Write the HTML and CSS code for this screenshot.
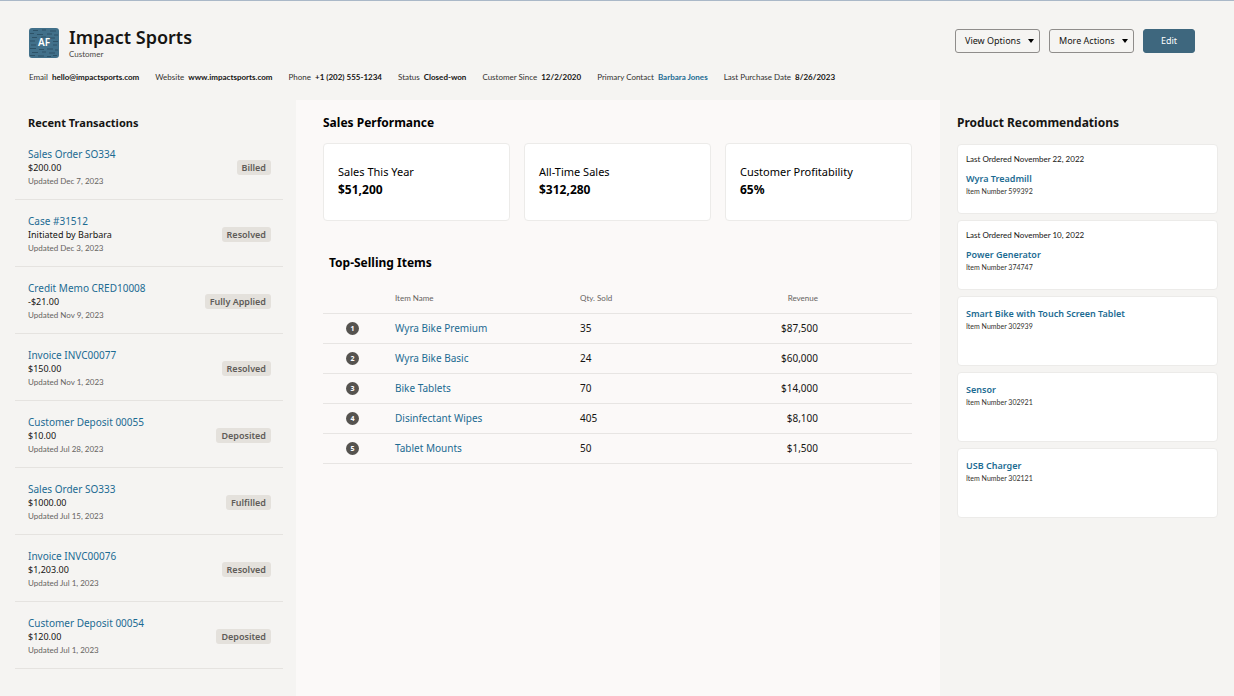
FILE: index.html
```html
<!DOCTYPE html>
<html lang="en">
<head>
<meta charset="utf-8">
<meta name="viewport" content="width=device-width, initial-scale=1">
<title>Impact Sports</title>
<link rel="stylesheet" href="styles.css">
</head>
<body>
<header class="header">
  <div class="header-top">
    <svg class="avatar" viewBox="0 0 30 30" role="img" aria-label="AF">
      <rect width="30" height="30" rx="3" fill="#41708a"/>
      <path d="M4 2.500h5M13 2h4M21 3h6M1 5.500h4M8 6.500h6M18 6h5M25 7h4M3 9.500h5M12 9h5M20 10h6M1 13h5M24 13.500h5M2 17h5M24 17h4M1 20.500h6M10 21.500h5M18 21h6M26 22h3M3 24.500h6M13 24h4M20 25h6M1 27.500h5M9 28h6M18 28.500h4M24 27.500h4" fill="none" stroke="#284a5e" stroke-width=".8"/>
      <text class="avatar-text" x="15" y="18" text-anchor="middle">AF</text>
    </svg>
    <div class="identity">
      <h1 class="name">Impact Sports</h1>
      <p class="kind">Customer</p>
    </div>
    <div class="actions">
      <button class="button" type="button" aria-haspopup="menu">View Options<svg class="caret" viewBox="0 0 6 4" aria-hidden="true"><path d="M0 0h6L3 4z"/></svg></button>
      <button class="button" type="button" aria-haspopup="menu">More Actions<svg class="caret" viewBox="0 0 6 4" aria-hidden="true"><path d="M0 0h6L3 4z"/></svg></button>
      <button class="button primary" type="button">Edit</button>
    </div>
  </div>
  <dl class="facts">
    <div class="fact"><dt>Email</dt><dd>hello@impactsports.com</dd></div>
    <div class="fact"><dt>Website</dt><dd>www.impactsports.com</dd></div>
    <div class="fact"><dt>Phone</dt><dd>+1 (202) 555-1234</dd></div>
    <div class="fact"><dt>Status</dt><dd>Closed-won</dd></div>
    <div class="fact"><dt>Customer Since</dt><dd>12/2/2020</dd></div>
    <div class="fact"><dt>Primary Contact</dt><dd><a href="#">Barbara Jones</a></dd></div>
    <div class="fact"><dt>Last Purchase Date</dt><dd>8/26/2023</dd></div>
  </dl>
</header>
<div class="columns">
  <aside class="transactions">
    <h2 class="section-title">Recent Transactions</h2>
    <ul class="list">
      <li class="row"><div><a class="row-title" href="#">Sales Order SO334</a><p class="detail">$200.00</p><p class="updated">Updated Dec 7, 2023</p></div><span class="status">Billed</span></li>
      <li class="row"><div><a class="row-title" href="#">Case #31512</a><p class="detail">Initiated by Barbara</p><p class="updated">Updated Dec 3, 2023</p></div><span class="status">Resolved</span></li>
      <li class="row"><div><a class="row-title" href="#">Credit Memo CRED10008</a><p class="detail">-$21.00</p><p class="updated">Updated Nov 9, 2023</p></div><span class="status">Fully Applied</span></li>
      <li class="row"><div><a class="row-title" href="#">Invoice INVC00077</a><p class="detail">$150.00</p><p class="updated">Updated Nov 1, 2023</p></div><span class="status">Resolved</span></li>
      <li class="row"><div><a class="row-title" href="#">Customer Deposit 00055</a><p class="detail">$10.00</p><p class="updated">Updated Jul 28, 2023</p></div><span class="status">Deposited</span></li>
      <li class="row"><div><a class="row-title" href="#">Sales Order SO333</a><p class="detail">$1000.00</p><p class="updated">Updated Jul 15, 2023</p></div><span class="status">Fulfilled</span></li>
      <li class="row"><div><a class="row-title" href="#">Invoice INVC00076</a><p class="detail">$1,203.00</p><p class="updated">Updated Jul 1, 2023</p></div><span class="status">Resolved</span></li>
      <li class="row"><div><a class="row-title" href="#">Customer Deposit 00054</a><p class="detail">$120.00</p><p class="updated">Updated Jul 1, 2023</p></div><span class="status">Deposited</span></li>
    </ul>
  </aside>
  <main class="main">
    <h2 class="section-title">Sales Performance</h2>
    <div class="stats">
      <section class="stat"><h3 class="stat-label">Sales This Year</h3><p class="stat-value">$51,200</p></section>
      <section class="stat"><h3 class="stat-label">All-Time Sales</h3><p class="stat-value">$312,280</p></section>
      <section class="stat"><h3 class="stat-label">Customer Profitability</h3><p class="stat-value">65%</p></section>
    </div>
    <h2 class="section-title items-title">Top-Selling Items</h2>
    <table class="items">
      <thead><tr><th class="rank-cell"></th><th class="name-cell" scope="col">Item Name</th><th class="qty-cell" scope="col">Qty. Sold</th><th class="revenue" scope="col">Revenue</th></tr></thead>
      <tbody>
        <tr><td class="rank-cell"><span class="rank">1</span></td><td><a href="#">Wyra Bike Premium</a></td><td>35</td><td class="revenue">$87,500</td></tr>
        <tr><td class="rank-cell"><span class="rank">2</span></td><td><a href="#">Wyra Bike Basic</a></td><td>24</td><td class="revenue">$60,000</td></tr>
        <tr><td class="rank-cell"><span class="rank">3</span></td><td><a href="#">Bike Tablets</a></td><td>70</td><td class="revenue">$14,000</td></tr>
        <tr><td class="rank-cell"><span class="rank">4</span></td><td><a href="#">Disinfectant Wipes</a></td><td>405</td><td class="revenue">$8,100</td></tr>
        <tr><td class="rank-cell"><span class="rank">5</span></td><td><a href="#">Tablet Mounts</a></td><td>50</td><td class="revenue">$1,500</td></tr>
      </tbody>
    </table>
  </main>
  <aside class="recommendations">
    <h2 class="section-title">Product Recommendations</h2>
    <div class="products">
      <article class="product"><p class="ordered">Last Ordered November 22, 2022</p><a class="product-name" href="#">Wyra Treadmill</a><p class="number">Item Number 599392</p></article>
      <article class="product"><p class="ordered">Last Ordered November 10, 2022</p><a class="product-name" href="#">Power Generator</a><p class="number">Item Number 374747</p></article>
      <article class="product short"><a class="product-name" href="#">Smart Bike with Touch Screen Tablet</a><p class="number">Item Number 302939</p></article>
      <article class="product short"><a class="product-name" href="#">Sensor</a><p class="number">Item Number 302921</p></article>
      <article class="product short"><a class="product-name" href="#">USB Charger</a><p class="number">Item Number 302121</p></article>
    </div>
  </aside>
</div>
</body>
</html>
```
FILE: styles.css
```css
* { box-sizing: border-box; }

body {
  margin: 0;
  min-height: 100vh;
  display: flex;
  flex-direction: column;
  background: #f5f4f2;
  color: #161513;
  font-family: "Noto Sans", "Open Sans", sans-serif;
  font-size: 10px;
}

h1, h2, h3, p, ul, dl, dd { margin: 0; padding: 0; }
a { color: #1c6b92; text-decoration: none; }
a:hover { text-decoration: underline; }

.kind, .facts, .updated, .ordered, .number, .items th {
  font-family: Lato, "Noto Sans", sans-serif;
}

.header {
  border-top: 1px solid #aab8c8;
  padding: 26px 39px 0 29px;
}
.header-top { display: flex; align-items: flex-start; }
.avatar { width: 30px; height: 30px; margin-top: 1px; }
.avatar-text { fill: #fff; font-size: 10px; font-weight: 600; }
.identity { margin-left: 10px; }
.name { font-size: 18px; line-height: 20px; font-weight: 600; }
.kind { margin-top: 1px; font-size: 8px; line-height: 12px; color: #4a4845; }
.actions { display: flex; gap: 9px; margin: 2px 0 0 auto; }
.button {
  display: flex;
  align-items: center;
  justify-content: space-between;
  gap: 6px;
  min-width: 85px;
  height: 24px;
  padding: 0 5px 0 9px;
  border: 1px solid #8f8d8b;
  border-radius: 3px;
  background: transparent;
  color: #161513;
  font: 9px/14px "Noto Sans", "Open Sans", sans-serif;
}
.primary {
  min-width: 52px;
  padding: 0;
  justify-content: center;
  border-color: #3e677e;
  background: #3e677e;
  color: #fff;
}
.caret { width: 6px; height: 4px; }

.facts {
  display: flex;
  flex-wrap: wrap;
  gap: 4px 16px;
  margin-top: 10px;
  font-size: 8px;
  line-height: 14px;
}
.fact { display: flex; gap: 4px; }
.fact dt { color: #33312e; }
.fact dd { font-weight: 700; }

.columns {
  flex: 1;
  display: grid;
  grid-template-columns: 296px minmax(0, 1fr) 294px;
  margin-top: 16px;
}
.section-title { font-size: 12px; line-height: 16px; font-weight: 700; }

.transactions { padding: 15px 13px 0 15px; }
.transactions .section-title { padding-left: 13px; font-size: 11px; }
.list { list-style: none; margin-top: 2px; }
.row {
  display: flex;
  justify-content: space-between;
  align-items: center;
  padding: 13px 12px 11px 13px;
  border-bottom: 1px solid #e5e3e0;
}
.row-title { display: block; font-size: 10px; line-height: 16px; }
.detail { font-size: 9px; line-height: 12px; }
.updated { font-size: 8px; line-height: 14px; color: #66635f; }
.status {
  padding: 0 5px;
  border-radius: 3px;
  background: #e4e1dc;
  color: #5f5c58;
  font-size: 9px;
  line-height: 15px;
  font-weight: 600;
}

.main { padding: 15px 28px 0 27px; background: #fbf9f8; color: #000; }
.stats {
  display: grid;
  grid-template-columns: repeat(3, 1fr);
  gap: 14px;
  margin-top: 12px;
}
.stat {
  padding: 19px 14px 22px;
  border: 1px solid #ecebe9;
  border-radius: 4px;
  background: #fff;
}
.stat-label { font-size: 11px; line-height: 18px; font-weight: 400; }
.stat-value { font-size: 12px; line-height: 17px; font-weight: 700; }
.items-title { margin-top: 34px; padding-left: 6px; }
.items {
  width: 100%;
  margin-top: 12px;
  border-collapse: collapse;
  table-layout: fixed;
  color: #161513;
  font-size: 10px;
}
.items th, .items td {
  height: 30px;
  padding: 0;
  border-bottom: 1px solid #e7e5e3;
  text-align: left;
}
.items th { font-size: 8px; font-weight: 400; color: #66635f; }
.items .rank-cell { width: 72px; padding-left: 23px; }
.name-cell { width: 185px; }
.qty-cell { width: 116px; }
.items .revenue { padding-right: 94px; text-align: right; }
.rank {
  display: block;
  width: 13px;
  height: 13px;
  border-radius: 50%;
  background: #55534f;
  color: #fff;
  font-size: 7px;
  line-height: 13px;
  font-weight: 700;
  text-align: center;
}

.recommendations { padding: 15px 16px 0 17px; }
.products { display: grid; gap: 6px; margin-top: 13px; }
.product {
  min-height: 70px;
  padding: 8px;
  border: 1px solid #ecebe9;
  border-radius: 4px;
  background: #fff;
}
.short { padding-top: 10px; }
.ordered { margin-bottom: 7px; font-size: 8px; line-height: 12px; }
.product-name { display: block; font-size: 9px; line-height: 14px; font-weight: 600; }
.number { font-size: 7px; line-height: 10px; color: #33312e; }
```
